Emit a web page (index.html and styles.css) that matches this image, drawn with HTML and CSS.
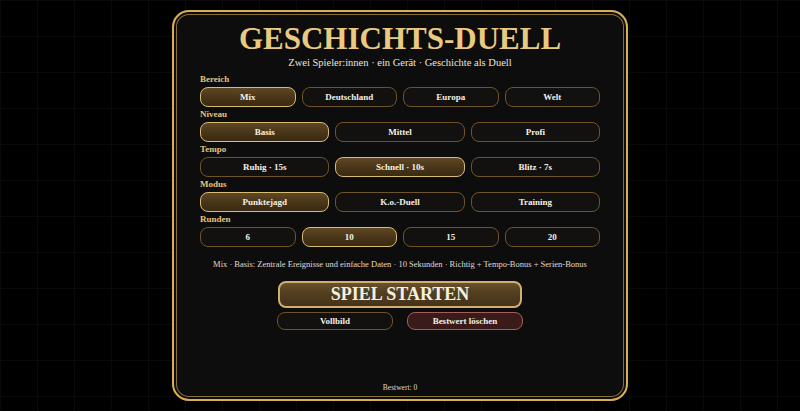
FILE: index.html
```html
<!DOCTYPE html>
<html lang="de">
<head>
<meta charset="utf-8">
<title>Geschichts-Duell</title>
<link rel="stylesheet" href="styles.css">
</head>
<body>
<main class="card">
  <h1 class="title">GESCHICHTS-DUELL</h1>
  <p class="subtitle">Zwei Spieler:innen · ein Gerät · Geschichte als Duell</p>

  <section class="group">
    <div class="label">Bereich</div>
    <div class="row four">
      <button class="opt active">Mix</button>
      <button class="opt">Deutschland</button>
      <button class="opt">Europa</button>
      <button class="opt">Welt</button>
    </div>
  </section>

  <section class="group">
    <div class="label">Niveau</div>
    <div class="row three">
      <button class="opt active">Basis</button>
      <button class="opt">Mittel</button>
      <button class="opt">Profi</button>
    </div>
  </section>

  <section class="group">
    <div class="label">Tempo</div>
    <div class="row three">
      <button class="opt">Ruhig · 15s</button>
      <button class="opt active">Schnell · 10s</button>
      <button class="opt">Blitz · 7s</button>
    </div>
  </section>

  <section class="group">
    <div class="label">Modus</div>
    <div class="row three">
      <button class="opt active">Punktejagd</button>
      <button class="opt">K.o.-Duell</button>
      <button class="opt">Training</button>
    </div>
  </section>

  <section class="group">
    <div class="label">Runden</div>
    <div class="row four">
      <button class="opt">6</button>
      <button class="opt active">10</button>
      <button class="opt">15</button>
      <button class="opt">20</button>
    </div>
  </section>

  <p class="info">Mix · Basis: Zentrale Ereignisse und einfache Daten · 10 Sekunden · Richtig + Tempo-Bonus + Serien-Bonus</p>

  <div class="actions">
    <button class="start">SPIEL STARTEN</button>
    <div class="minor">
      <button class="small">Vollbild</button>
      <button class="small danger">Bestwert löschen</button>
    </div>
  </div>

  <p class="best">Bestwert: 0</p>
</main>
</body>
</html>
```

FILE: styles.css
```css
* { box-sizing: border-box; }

html, body { height: 100%; }

body {
  margin: 0;
  background-color: #000;
  background-image:
    linear-gradient(to right, #0a0a0a 1px, transparent 1px),
    linear-gradient(to bottom, #0a0a0a 1px, transparent 1px);
  background-size: 37px 36px;
  background-position: 0 0;
  font-family: "Liberation Serif", "Times New Roman", serif;
  display: flex;
  justify-content: center;
  padding-top: 10px;
}

.card {
  width: 456px;
  height: 391px;
  background: #0d0d0d;
  border: 2px solid #d9ae55;
  border-radius: 17px;
  box-shadow: inset 0 0 0 2px #0d0d0d, inset 0 0 0 3px #8c7038;
  padding: 9px 26px 6px;
  display: flex;
  flex-direction: column;
}

.title {
  margin: 0;
  text-align: center;
  font-size: 31px;
  line-height: 36px;
  font-weight: 700;
  color: #e9ca80;
}

.subtitle {
  margin: -1px 0 0;
  text-align: center;
  font-size: 10.5px;
  line-height: 13px;
  color: #ece6d8;
}

.group { margin-top: 1px; }
.group:first-of-type { margin-top: 4px; }

.label {
  font-size: 9px;
  line-height: 12px;
  font-weight: 700;
  color: #e4c47e;
  margin-bottom: 2px;
}

.row {
  display: grid;
  gap: 6px;
}
.row.four { grid-template-columns: repeat(4, 1fr); }
.row.three { grid-template-columns: repeat(3, 1fr); }

button {
  font-family: inherit;
  cursor: pointer;
}

.opt {
  height: 20px;
  border-radius: 8px;
  border: 1.5px solid #6f5428;
  background: #121110;
  color: #f6f0e2;
  font-size: 9px;
  font-weight: 700;
  padding: 0;
}

.opt.active {
  border-color: #d9bc73;
  background: linear-gradient(to bottom, #5f4723 0%, #4a3619 50%, #3a2a12 100%);
}

.info {
  margin: 11px 0 0;
  text-align: center;
  font-size: 8.5px;
  line-height: 12px;
  color: #e0dacd;
}

.actions {
  margin-top: 11px;
  display: flex;
  flex-direction: column;
  align-items: center;
  gap: 4px;
}

.start {
  width: 244px;
  height: 27px;
  border-radius: 8px;
  border: 2px solid #cfb070;
  background: linear-gradient(to bottom, #6a5230 0%, #55401f 35%, #45321a 100%);
  color: #f5efe0;
  font-size: 18px;
  font-weight: 700;
  padding: 0;
}

.minor {
  display: flex;
  gap: 14px;
}

.small {
  width: 116px;
  height: 18px;
  border-radius: 8px;
  border: 1.5px solid #6f5428;
  background: #121110;
  color: #f6f0e2;
  font-size: 9px;
  font-weight: 700;
  padding: 0;
}

.small.danger {
  border-color: #a05e5e;
  background: #3b1a1a;
}

.best {
  margin: auto 0 0;
  text-align: center;
  font-size: 7.5px;
  line-height: 10px;
  color: #e0dacd;
}
```
